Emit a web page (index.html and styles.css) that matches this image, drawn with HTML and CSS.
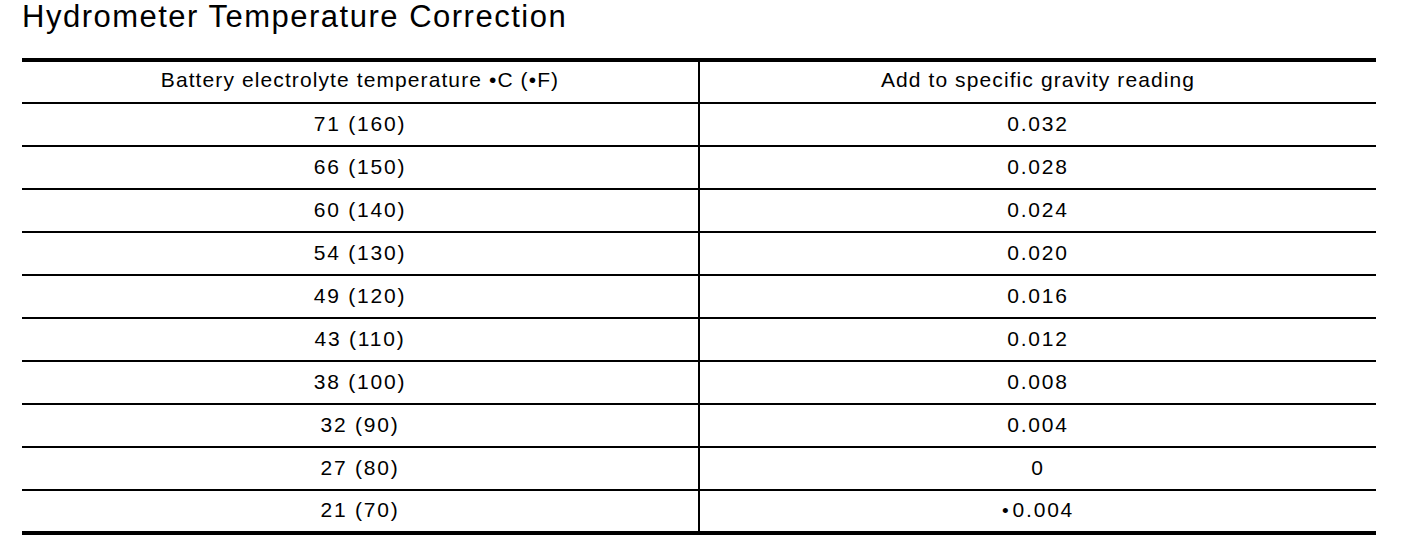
FILE: index.html
```html
<!DOCTYPE html>
<html>
<head>
<meta charset="utf-8">
<link rel="stylesheet" href="styles.css">
</head>
<body>
<div class="page">
  <h1 class="title">Hydrometer Temperature Correction</h1>
  <table class="hydro">
    <thead>
      <tr><th>Battery electrolyte temperature •C (•F)</th><th>Add to specific gravity reading</th></tr>
    </thead>
    <tbody>
      <tr><td>71 (160)</td><td>0.032</td></tr>
      <tr><td>66 (150)</td><td>0.028</td></tr>
      <tr><td>60 (140)</td><td>0.024</td></tr>
      <tr><td>54 (130)</td><td>0.020</td></tr>
      <tr><td>49 (120)</td><td>0.016</td></tr>
      <tr><td>43 (110)</td><td>0.012</td></tr>
      <tr><td>38 (100)</td><td>0.008</td></tr>
      <tr><td>32 (90)</td><td>0.004</td></tr>
      <tr><td>27 (80)</td><td>0</td></tr>
      <tr class="last"><td>21 (70)</td><td><span class="neg">•</span>0.004</td></tr>
    </tbody>
  </table>
</div>
</body>
</html>
```

FILE: styles.css
```css
html, body {
  margin: 0;
  padding: 0;
  background: #fff;
}
.page {
  padding: 0 32px 0 22px;
  font-family: "Liberation Sans", Arial, sans-serif;
  color: #000;
}
.title {
  margin: 0;
  padding-top: 2px;
  height: 56px;
  font-size: 31px;
  font-weight: normal;
  line-height: 30px;
  letter-spacing: 1.5px;
  white-space: nowrap;
}
.hydro {
  width: 1354px;
  border-collapse: collapse;
  table-layout: fixed;
  border-top: 4px solid #000;
  border-bottom: 4px solid #000;
}
.hydro th, .hydro td {
  font-size: 21px;
  font-weight: normal;
  text-align: center;
  vertical-align: middle;
  padding: 0;
  border-bottom: 2px solid #000;
  white-space: nowrap;
}
.hydro th {
  height: 36px;
  letter-spacing: 1.1px;
  padding-bottom: 4px;
}
.hydro td {
  height: 39px;
  padding-bottom: 2px;
  letter-spacing: 1.8px;
}
.hydro tr.last td {
  height: 38px;
  border-bottom: none;
}
.hydro th:first-child, .hydro td:first-child {
  width: 676px;
  border-right: 2px solid #000;
}
.neg {
  font-size: 19px;
  letter-spacing: 0;
  margin-right: 4px;
}
```
